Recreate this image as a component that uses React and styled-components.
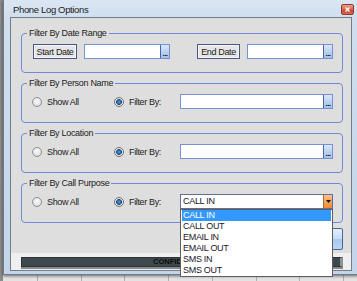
import React from "react";
import styled, { createGlobalStyle, css } from "styled-components";

const FONT = `"Liberation Sans", Arial, sans-serif`;

const GlobalStyle = createGlobalStyle`
  html, body {
    margin: 0;
    padding: 0;
  }
  body {
    font-family: ${FONT};
    overflow: hidden;
    white-space: nowrap;
  }
`;

// backdrop behind the dialog (a sheet with grid lines)
const Desktop = styled.div`
  width: 357px;
  height: 281px;
  overflow: hidden;
  box-sizing: border-box;
  padding-left: 3px;
  background-color: #e3e3e3;
  background-image: linear-gradient(90deg, #8b8b8b 0 3px, transparent 3px),
    repeating-linear-gradient(
      90deg,
      transparent 0 37px,
      #b1b1b1 37px 38px,
      transparent 38px 43.7px
    );
`;

const Window = styled.div`
  width: 356px;
  height: 275px;
  box-sizing: border-box;
  display: flex;
  flex-direction: column;
  padding: 0 6px 3px 6px;
  border-left: 1px solid #6d7b8b;
  border-bottom: 1px solid #6d7b8b;
  background: linear-gradient(180deg, #dae6f3 0, #d0deef 17px, #c4d5ea 100%);
  box-shadow: 0 1px 3px rgba(0, 0, 0, 0.55);
`;

const TitleBar = styled.div`
  height: 17px;
  display: flex;
  align-items: center;
  justify-content: space-between;
`;

const Title = styled.span`
  padding-left: 3px;
  padding-top: 2px;
  font-size: 9.5px;
  letter-spacing: -0.35px;
  color: #1c1c1c;
`;

const CloseButton = styled.span`
  width: 13px;
  height: 11px;
  margin-right: -1px;
  margin-top: 1px;
  box-sizing: border-box;
  display: flex;
  align-items: center;
  justify-content: center;
  border: 1px solid #8c3b2c;
  border-radius: 2px;
  background: linear-gradient(180deg, #eaa08c 0, #d8634a 50%, #c4432c 51%, #d9684b 100%);
`;

const Client = styled.div`
  width: 342px;
  flex: 1;
  box-sizing: border-box;
  display: flex;
  flex-direction: column;
  border: 1px solid #707d8b;
  background: #dedede;
`;

const Body = styled.div`
  flex: 1;
  display: flex;
  flex-direction: column;
  gap: 5px;
  padding: 10px 8px 0 10px;
`;

const GroupBox = styled.fieldset`
  margin: 0;
  padding: 0;
  min-width: 0;
  border: 1px solid #7289d8;
  border-radius: 4px;
`;

const Legend = styled.legend`
  margin-left: 5px;
  padding: 0 2px;
  font-size: 9px;
  letter-spacing: -0.3px;
  line-height: 10px;
  color: #222;
`;

const Row = styled.div`
  display: flex;
  align-items: center;
  height: 15px;
  padding: 6px 8px 13px ${(p) => p.$inset}px;
`;

const DateButton = styled.div`
  width: ${(p) => p.$w}px;
  height: 15px;
  box-sizing: border-box;
  display: flex;
  align-items: center;
  justify-content: center;
  margin-right: 7px;
  border: 1px solid #485883;
  background: #e6e6e6;
  box-shadow: inset 0 0 0 1px #f7f7f7;
  font-size: 9px;
  letter-spacing: -0.35px;
  color: #222;
`;

const Field = styled.div`
  position: relative;
  width: ${(p) => p.$w}px;
  height: 15px;
  box-sizing: border-box;
  display: flex;
  margin-right: ${(p) => p.$gap || 0}px;
  border: 1px solid ${(p) => (p.$select ? "#5f6f96" : "#7890d4")};
  background: #fff;
`;

const FieldText = styled.span`
  flex: 1;
  padding-left: 2px;
  font-size: 9px;
  letter-spacing: -0.3px;
  line-height: 13px;
  color: #151515;
`;

const Ellipsis = styled.span`
  width: 8px;
  display: flex;
  align-items: flex-end;
  justify-content: center;
  border-left: 1px solid #4463b0;
  background: linear-gradient(180deg, #dbe7f7 0, #b9d0ef 55%, #a5c1ea 100%);
  font-size: 8px;
  font-weight: bold;
  line-height: 8px;
  letter-spacing: -0.6px;
  color: #111;
`;

const DropArrow = styled.span`
  width: 8px;
  display: flex;
  align-items: center;
  justify-content: center;
  border-left: 1px solid #b86b2a;
  background: linear-gradient(180deg, #fcc38f 0, #f6a25a 50%, #ef8a38 100%);
`;

const RadioOption = styled.label`
  width: ${(p) => p.$w}px;
  display: flex;
  align-items: center;
  gap: 5px;
  font-size: 9px;
  letter-spacing: -0.35px;
  color: #222;
`;

const RadioDot = styled.span`
  width: 10px;
  height: 10px;
  box-sizing: border-box;
  border-radius: 50%;
  border: 1px solid #8e9091;
  background: radial-gradient(circle at 50% 40%, #fbfbfb 0, #e4e4e4 60%, #cfcfcf 100%);
  ${(p) =>
    p.$checked &&
    css`
      border-color: #6b6f74;
      background: radial-gradient(
        circle at 50% 50%,
        #48a8f0 0,
        #1b66b3 2px,
        #2a3f58 2.6px,
        #f2f2f2 3.2px,
        #d0d0d0 100%
      );
    `}
`;

const DropList = styled.ul`
  position: absolute;
  left: -1px;
  top: 14px;
  z-index: 10;
  width: 153px;
  margin: 0;
  padding: 0 1px;
  box-sizing: border-box;
  list-style: none;
  background: #fff;
  border: 1px solid #5e5e5e;
`;

const DropItem = styled.li`
  height: 11px;
  padding-left: 1px;
  font-size: 9px;
  letter-spacing: -0.3px;
  line-height: 11px;
  color: ${(p) => (p.$active ? "#fff" : "#1b1528")};
  background: ${(p) => (p.$active ? "#3399ff" : "transparent")};
`;

const ButtonRow = styled.div`
  display: flex;
  justify-content: flex-end;
`;

const OkButton = styled.div`
  width: 75px;
  height: 22px;
  box-sizing: border-box;
  display: flex;
  align-items: center;
  justify-content: center;
  border: 1px solid #4a6797;
  border-radius: 2px;
  background: linear-gradient(180deg, #e2eefc 0, #c6dcf7 50%, #a9c8f0 51%, #b9d4f5 100%);
  font-size: 9px;
  color: #111;
`;

const Footer = styled.div`
  height: 17px;
  box-sizing: border-box;
  padding: 4px 8px 0 10px;
  background: #efefef;
`;

const ConfidentialBar = styled.div`
  height: 10px;
  box-sizing: border-box;
  display: flex;
  align-items: center;
  justify-content: center;
  border: 1px solid #2c3437;
  border-right: 3px solid #8e9496;
  background: #3e494d;
  box-shadow: 0 2px 0 #8a8a8a;
  font-size: 7.5px;
  font-weight: bold;
  line-height: 8px;
  color: #0c0c0c;
`;

const purposes = ["CALL IN", "CALL OUT", "EMAIL IN", "EMAIL OUT", "SMS IN", "SMS OUT"];

const radioGroups = [
  { title: "Filter By Person Name" },
  { title: "Filter By Location" },
  { title: "Filter By Call Purpose", select: true },
];

function TextBox({ w, gap }) {
  return (
    <Field $w={w} $gap={gap}>
      <FieldText />
      <Ellipsis>...</Ellipsis>
    </Field>
  );
}

function PurposeSelect() {
  return (
    <Field $w={153} $select>
      <FieldText>CALL IN</FieldText>
      <DropArrow>
        <svg width="5" height="3" viewBox="0 0 5 3">
          <polygon points="0,0 5,0 2.5,3" fill="#111" />
        </svg>
      </DropArrow>
      <DropList>
        {purposes.map((p, i) => (
          <DropItem key={p} $active={i === 0}>
            {p}
          </DropItem>
        ))}
      </DropList>
    </Field>
  );
}

export default function App() {
  return (
    <>
      <GlobalStyle />
      <Desktop>
        <Window>
          <TitleBar>
            <Title>Phone Log Options</Title>
            <CloseButton>
              <svg width="5" height="5" viewBox="0 0 5 5">
                <path d="M0.5 0.5 L4.5 4.5 M4.5 0.5 L0.5 4.5" stroke="#fff" strokeWidth="1.3" />
              </svg>
            </CloseButton>
          </TitleBar>
          <Client>
            <Body>
              <GroupBox>
                <Legend>Filter By Date Range</Legend>
                <Row $inset={11}>
                  <DateButton $w={44}>Start Date</DateButton>
                  <TextBox w={86} gap={27} />
                  <DateButton $w={43}>End Date</DateButton>
                  <TextBox w={86} />
                </Row>
              </GroupBox>
              {radioGroups.map((g) => (
                <GroupBox key={g.title}>
                  <Legend>{g.title}</Legend>
                  <Row $inset={10}>
                    <RadioOption $w={82}>
                      <RadioDot />
                      Show All
                    </RadioOption>
                    <RadioOption $w={66}>
                      <RadioDot $checked />
                      Filter By:
                    </RadioOption>
                    {g.select ? <PurposeSelect /> : <TextBox w={153} />}
                  </Row>
                </GroupBox>
              ))}
              <ButtonRow>
                <OkButton>OK</OkButton>
              </ButtonRow>
            </Body>
            <Footer>
              <ConfidentialBar>CONFIDENTIAL</ConfidentialBar>
            </Footer>
          </Client>
        </Window>
      </Desktop>
    </>
  );
}
